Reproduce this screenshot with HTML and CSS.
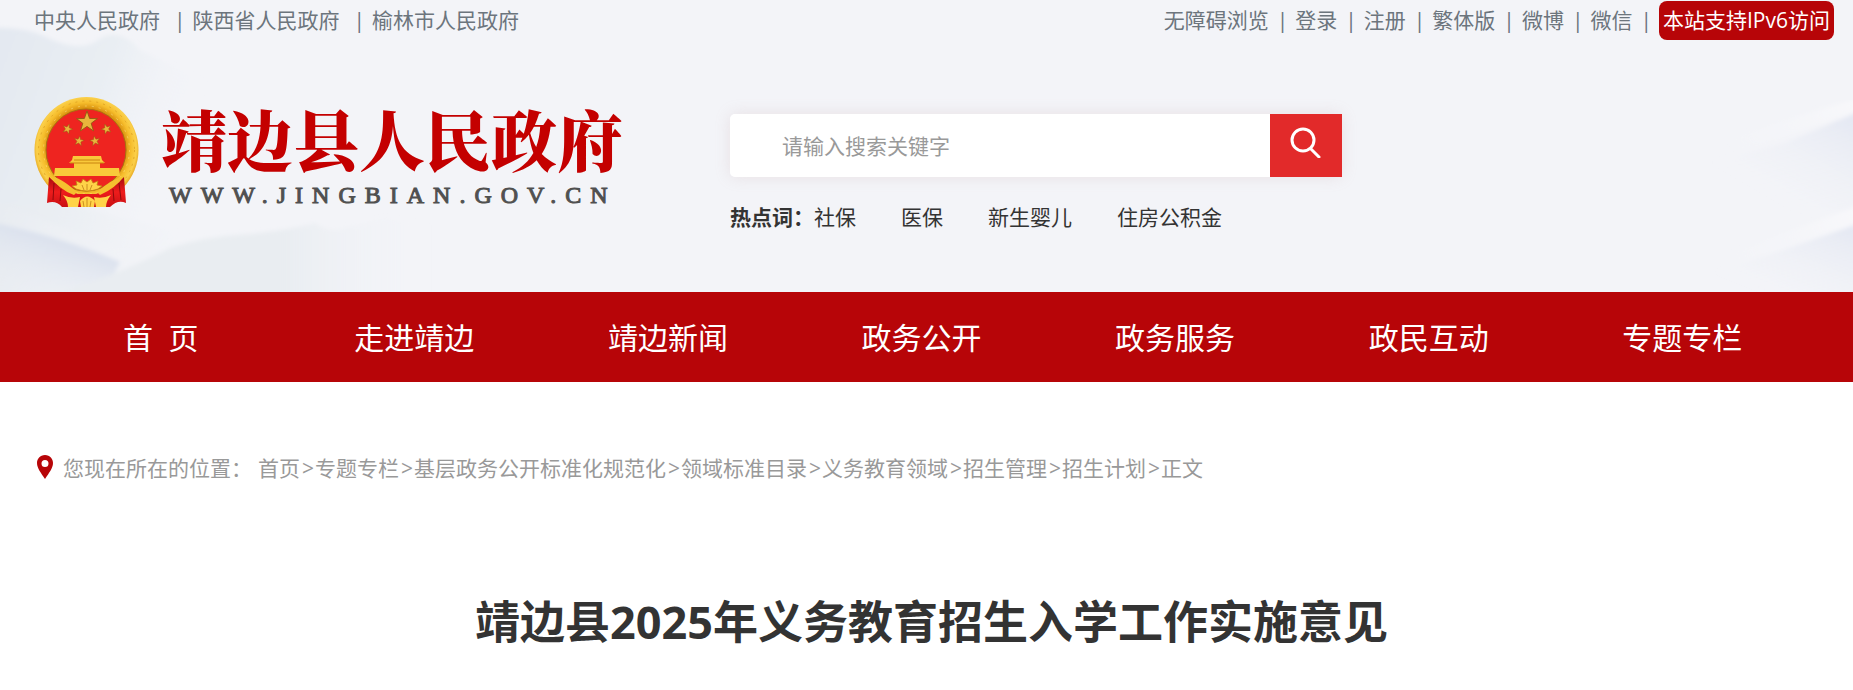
FILE: index.html
```html
<!DOCTYPE html>
<html lang="zh-CN">

<head>
  <meta charset="UTF-8" />
  <meta name="viewport" content="width=device-width, initial-scale=1.0" />
  <title>靖边县2025年义务教育招生入学工作实施意见</title>
  <link rel="stylesheet" href="styles.css">
</head>

<body>

  <!-- 页头 -->
  <header class="header">
    <svg class="hills hills-left" viewBox="0 0 460 292" aria-hidden="true">
      <defs>
        <linearGradient id="fadeA" gradientUnits="userSpaceOnUse" x1="0" y1="60" x2="190" y2="130">
          <stop offset="0" stop-color="#e4e9f1" />
          <stop offset="0.5" stop-color="#e9eef3" />
          <stop offset="1" stop-color="#f3f4f8" stop-opacity="0" />
        </linearGradient>
        <linearGradient id="fadeB" gradientUnits="userSpaceOnUse" x1="20" y1="230" x2="0" y2="292">
          <stop offset="0" stop-color="#dce2ee" />
          <stop offset="1" stop-color="#e9edf2" stop-opacity="0" />
        </linearGradient>
        <linearGradient id="fadeC" gradientUnits="userSpaceOnUse" x1="0" y1="210" x2="200" y2="240">
          <stop offset="0" stop-color="#e8ecf1" />
          <stop offset="1" stop-color="#f0f3f6" stop-opacity="0" />
        </linearGradient>
        <linearGradient id="fadeF" gradientUnits="userSpaceOnUse" x1="60" y1="0" x2="430" y2="0">
          <stop offset="0" stop-color="#e9edf1" />
          <stop offset="0.6" stop-color="#e9edf1" />
          <stop offset="1" stop-color="#f3f4f8" stop-opacity="0" />
        </linearGradient>
        <filter id="soft"><feGaussianBlur stdDeviation="2" /></filter>
      </defs>
      <g filter="url(#soft)">
        <path fill="url(#fadeA)" d="M-10 28 Q25 26 48 38 Q78 52 95 42 Q118 24 140 50 L260 110 L260 300 L-10 200Z" />
        <path fill="url(#fadeC)" d="M-10 204 Q60 202 110 215 Q160 225 195 240 L180 300 L-10 300Z" />
        <path fill="url(#fadeB)" d="M-10 222 Q60 236 120 262 L100 300 L-10 300Z" />
        <path fill="url(#fadeF)" d="M40 300 Q130 270 170 248 Q205 236 250 234 Q290 230 315 223 Q330 234 345 228 L385 218 L460 230 L460 300Z" />
      </g>
    </svg>
    <svg class="hills hills-right" viewBox="0 0 160 192" aria-hidden="true">
      <defs>
        <linearGradient id="fadeD" x1="1" y1="0" x2="0.3" y2="0.8">
          <stop offset="0" stop-color="#e2e6f2" />
          <stop offset="1" stop-color="#f0f2f6" stop-opacity="0" />
        </linearGradient>
        <linearGradient id="fadeE" x1="1" y1="0" x2="0" y2="0.4">
          <stop offset="0" stop-color="#f8f8fb" />
          <stop offset="1" stop-color="#f6f7fa" stop-opacity="0" />
        </linearGradient>
      </defs>
      <g filter="url(#soft)">
        <path fill="url(#fadeE)" d="M170 -4 L20 44 L16 62 L170 10Z" />
        <path fill="url(#fadeD)" d="M170 10 L90 44 L20 62 L60 110 L170 110Z" />
        <path fill="url(#fadeE)" d="M170 104 L20 160 L16 176 L170 122Z" />
        <path fill="url(#fadeD)" d="M170 122 L90 150 L10 176 L0 200 L170 200Z" />
      </g>
    </svg>

    <div class="topbar">
      <div class="top-gov">
        <a href="#">中央人民政府</a><span>|</span>
        <a href="#">陕西省人民政府</a><span>|</span>
        <a href="#">榆林市人民政府</a>
      </div>
      <div class="top-tools">
        <a href="#">无障碍浏览</a><span>|</span>
        <a href="#">登录</a><span>|</span>
        <a href="#">注册</a><span>|</span>
        <a href="#">繁体版</a><span>|</span>
        <a href="#">微博</a><span>|</span>
        <a href="#">微信</a><span>|</span>
        <a class="ipv6" href="#">本站支持IPv6访问</a>
      </div>
    </div>

    <div class="brand-row">
      <a class="logo" href="#">
        <svg class="emblem" viewBox="0 0 105 110" aria-hidden="true">
          <defs>
            <radialGradient id="gold" cx="0.5" cy="0.48" r="0.52">
              <stop offset="0.72" stop-color="#d9920f" />
              <stop offset="0.82" stop-color="#f6bd2c" />
              <stop offset="0.92" stop-color="#fbd04a" />
              <stop offset="1" stop-color="#e2a019" />
            </radialGradient>
            <linearGradient id="ribbon" x1="0" y1="0" x2="0" y2="1">
              <stop offset="0" stop-color="#a80c10" />
              <stop offset="0.5" stop-color="#ee1c1c" />
              <stop offset="1" stop-color="#c91013" />
            </linearGradient>
            <path id="star" d="M0 -10 L2.4 -3.2 L9.5 -3.1 L3.8 1.2 L5.9 8.1 L0 4 L-5.9 8.1 L-3.8 1.2 L-9.5 -3.1 L-2.4 -3.2Z" />
          </defs>
          <ellipse cx="52.500" cy="53" rx="52" ry="53" fill="url(#gold)" />
          <g fill="none" stroke="#c98512" stroke-width="1" stroke-dasharray="2 5" opacity="0.5">
            <ellipse cx="52.500" cy="53" rx="48" ry="49" />
            <ellipse cx="52.500" cy="53" rx="43" ry="44" stroke="#fff09a" />
          </g>
          <ellipse cx="52" cy="53" rx="40" ry="41" fill="#ee2420" stroke="#a87010" stroke-width="1" />
          <g fill="#e9b53c" stroke="#8f5a12" stroke-width="0.8">
            <use href="#star" transform="translate(53 25) scale(1.1)" />
            <use href="#star" transform="translate(33.500 32) rotate(20) scale(0.52)" />
            <use href="#star" transform="translate(72.500 32) rotate(-20) scale(0.52)" />
            <use href="#star" transform="translate(45 44) rotate(10) scale(0.52)" />
            <use href="#star" transform="translate(61 44) rotate(-10) scale(0.52)" />
          </g>
          <path fill="#f9c93a" d="M39 59 H67 L68 63 L71 66 H66 V71 H85 L86 79 H20 L21 71 H40 V66 H35 L38 63Z" />
          <path stroke="#c9840f" stroke-width="1" fill="none" d="M36 66 H70 M40 63 H66" />
          <path fill="url(#ribbon)" d="M15 80 Q26 92 44 97 H62 Q80 91 90 80 L92 106 Q84 102 76 110 H28 Q22 103 13 106Z" />
          <path fill="#f5c02f" d="M16 79 Q26 80 43 95 L40 98 Q24 92 16 79Z M90 79 Q78 82 63 95 L66 98 Q82 91 90 79Z" />
          <path fill="#ffd348" stroke="#c47d10" stroke-width="0.8" d="M42 92 L38 89 L43 88 L42 84 L47 86 L49 82 L53 85 L57 82 L59 86 L64 84 L63 88 L68 89 L64 92 Q53 96 42 92Z" />
          <path fill="#ffd348" d="M29 98 Q37 102 46 100 L44 110 H34 Q34 104 29 98Z M77 98 Q69 102 60 100 L62 110 H72 Q72 104 77 98Z M46 104 Q53 95 61 104 L60 110 H47Z" />
          <path stroke="#bf7d16" stroke-width="0.8" fill="none" d="M53 87 V93 M48 88 L50 93 M58 88 L56 93 M53 101 V110 M49 104 L50 110 M57 104 L56 110" />
          <path stroke="#8f0a0d" stroke-width="1" fill="none" d="M20 86 L19 103 M27 92 L26 104 M85 86 L87 103 M79 92 L80 104" />
        </svg>
        <span class="logo-text">
          <strong>靖边县人民政府</strong>
          <small>WWW.JINGBIAN.GOV.CN</small>
        </span>
      </a>

      <div class="search">
        <form class="search-box">
          <input type="text" placeholder="请输入搜索关键字" aria-label="请输入搜索关键字" />
          <button type="button" aria-label="搜索">
            <svg viewBox="0 0 32 32" aria-hidden="true">
              <circle cx="13" cy="14" r="11" />
              <path d="M21 23 L29 31" />
            </svg>
          </button>
        </form>
        <div class="hotwords">
          <b>热点词：</b>
          <a href="#">社保</a>
          <a href="#">医保</a>
          <a href="#">新生婴儿</a>
          <a href="#">住房公积金</a>
        </div>
      </div>
    </div>
  </header>

  <!-- 主导航 -->
  <nav class="nav">
    <a href="#">首&nbsp;&nbsp;页</a>
    <a href="#">走进靖边</a>
    <a href="#">靖边新闻</a>
    <a href="#">政务公开</a>
    <a href="#">政务服务</a>
    <a href="#">政民互动</a>
    <a href="#">专题专栏</a>
  </nav>

  <!-- 正文 -->
  <main class="content">
    <div class="crumbs">
      <svg class="pin" viewBox="0 0 18 24" aria-hidden="true">
        <path fill-rule="evenodd" d="M9 0 C4 0 1 4 1 8 C1 13 5 18 9 24 C13 18 17 13 17 8 C17 4 14 0 9 0Z M9 5 A3.500 3.500 0 1 1 9 12 A3.500 3.500 0 1 1 9 5Z" />
      </svg>
      <span class="crumbs-label">您现在所在的位置：</span>
      <a href="#">首页</a><i>&gt;</i><a href="#">专题专栏</a><i>&gt;</i><a href="#">基层政务公开标准化规范化</a><i>&gt;</i><a href="#">领域标准目录</a><i>&gt;</i><a href="#">义务教育领域</a><i>&gt;</i><a href="#">招生管理</a><i>&gt;</i><a href="#">招生计划</a><i>&gt;</i><span>正文</span>
    </div>
    <h1>靖边县2025年义务教育招生入学工作实施意见</h1>
  </main>

</body>

</html>
```
FILE: styles.css
```css
:root {
  --red: #b70508;
  --red-light: #e22a2a;
  --grey: #6c757d;
  --text: #333;
}

* {
  box-sizing: border-box;
}

body {
  margin: 0;
  font-family: "Open Sans", "Noto Sans CJK SC", sans-serif;
  font-size: 21px;
  line-height: 32px;
  color: var(--text);
  background: #fff;
}

a {
  color: inherit;
  text-decoration: none;
}

/* Header */
.header {
  position: relative;
  height: 292px;
  background: #f3f4f8;
  overflow: hidden;
}

.hills {
  position: absolute;
  bottom: 0;
}

.hills-left {
  left: 0;
  width: 460px;
}

.hills-right {
  right: 0;
  width: 160px;
}

.topbar {
  position: relative;
  display: flex;
  justify-content: space-between;
  padding: 1px 19px 0 34px;
  line-height: 39px;
  color: var(--grey);
}

.top-gov,
.top-tools {
  display: flex;
}

.top-gov span {
  margin: 0 7px 0 14px;
}

.top-tools span {
  margin: 0 7px 0 8px;
}

.ipv6 {
  padding: 0 4px;
  border-radius: 8px;
  background: var(--red);
  color: #fff;
}

.brand-row {
  position: relative;
  display: flex;
  align-items: flex-start;
  padding: 57px 34px 0;
}

.logo {
  display: flex;
  gap: 22px;
  width: 696px;
}

.emblem {
  width: 105px;
  height: 110px;
}

.logo-text {
  display: flex;
  flex-direction: column;
}

.logo-text strong {
  font-family: "Noto Serif CJK SC", "Noto Sans CJK SC", serif;
  font-size: 66px;
  font-weight: 900;
  line-height: 82px;
  color: #c40000;
}

.logo-text small {
  padding: 4px 0 0 8px;
  font-family: "Liberation Serif", serif;
  font-size: 24px;
  line-height: 24px;
  letter-spacing: 9px;
  color: #505050;
  -webkit-text-stroke: 1px #505050;
}

.search {
  padding-top: 17px;
}

.search-box {
  display: flex;
  width: 612px;
  height: 63px;
  border-radius: 5px;
  box-shadow: 0 0 16px rgba(190, 150, 150, 0.2);
}

.search-box input {
  flex: 1;
  min-width: 0;
  padding: 0 52px;
  border: none;
  border-radius: 5px 0 0 5px;
  outline: none;
  font: inherit;
  background: #fff;
}

.search-box input::placeholder {
  color: #999;
}

.search-box button {
  width: 72px;
  padding: 0 0 4px;
  border: none;
  background: var(--red-light);
  cursor: pointer;
}

.search-box svg {
  width: 32px;
  height: 32px;
  fill: none;
  stroke: #fff;
  stroke-width: 3;
  stroke-linecap: round;
}

.hotwords {
  display: flex;
  gap: 45px;
  padding-top: 24px;
}

.hotwords b {
  margin-right: -45px;
}

/* Navigation */
.nav {
  display: flex;
  padding: 1px 44px 0 34px;
  background: var(--red);
}

.nav a {
  flex: 1;
  font-size: 30px;
  line-height: 89px;
  text-align: center;
  color: #fff;
}

/* Content */
.content {
  padding: 70px 34px 0;
}

.crumbs {
  display: flex;
  align-items: center;
  color: #999;
}

.crumbs-label {
  margin-right: 6px;
}

.crumbs i {
  margin: 0 1px 0 2px;
  font-style: normal;
}

.pin {
  width: 18px;
  height: 24px;
  margin: 0 9px 3px 2px;
  fill: var(--red);
}

h1 {
  margin: 106px 0 0;
  padding-left: 10px;
  font-size: 45px;
  line-height: 64px;
  text-align: center;
}
```
